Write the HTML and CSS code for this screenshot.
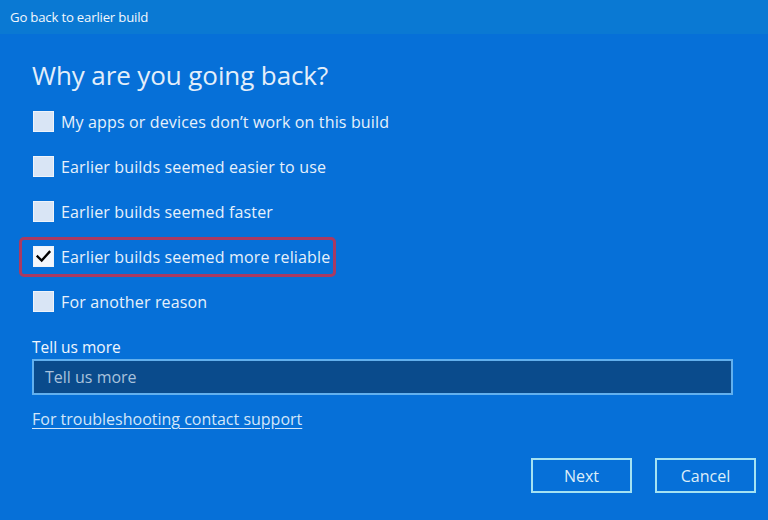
FILE: index.html
```html
<!DOCTYPE html>
<html lang="en">
<head>
<meta charset="utf-8">
<title>Go back to earlier build</title>
<link rel="stylesheet" href="styles.css">
</head>
<body>
<div class="window">
  <div class="titlebar">Go back to earlier build</div>
  <div class="content">
    <h1 class="heading">Why are you going back?</h1>
    <div class="options">
      <div class="row"><span class="opt"><span class="box"></span><span class="txt">My apps or devices don’t work on this build</span></span></div>
      <div class="row"><span class="opt"><span class="box"></span><span class="txt">Earlier builds seemed easier to use</span></span></div>
      <div class="row"><span class="opt"><span class="box"></span><span class="txt">Earlier builds seemed faster</span></span></div>
      <div class="row"><span class="opt opt-marked"><span class="box box-checked"><svg viewBox="0 0 21 21" width="21" height="21"><path d="M4 10.5 L8.5 15 L17 5.5" fill="none" stroke="#000" stroke-width="2.6" stroke-linecap="square"/></svg></span><span class="txt">Earlier builds seemed more reliable</span></span></div>
      <div class="row"><span class="opt"><span class="box"></span><span class="txt">For another reason</span></span></div>
    </div>
    <div class="field-label">Tell us more</div>
    <div class="input"><span class="placeholder">Tell us more</span></div>
    <a class="link" href="#">For troubleshooting contact support</a>
    <div class="buttons">
      <span class="btn">Next</span>
      <span class="btn">Cancel</span>
    </div>
  </div>
</div>
</body>
</html>
```
FILE: styles.css
```css
html, body {
  margin: 0;
  padding: 0;
}
body {
  width: 768px;
  height: 520px;
  overflow: hidden;
  background: #0670d8;
  font-family: "Open Sans", "Noto Sans", sans-serif;
  color: #e6f0fb;
}
.window {
  display: flex;
  flex-direction: column;
  height: 520px;
}
.titlebar {
  height: 34px;
  background: #0a79d3;
  color: #f2f7fc;
  font-size: 13.2px;
  line-height: 34px;
  padding-left: 10px;
  letter-spacing: -0.2px;
}
.content {
  display: flex;
  flex-direction: column;
  padding: 25px 12px 0 32px;
}
.heading {
  margin: 0;
  font-weight: 400;
  font-size: 26px;
  line-height: 32px;
  color: #e3eefa;
  letter-spacing: -0.1px;
}
.options {
  display: flex;
  flex-direction: column;
  margin-top: 8px;
}
.row {
  height: 45px;
  display: flex;
  align-items: center;
}
.opt {
  display: flex;
  align-items: center;
  padding-left: 1px;
}
.opt-marked {
  margin-left: -13px;
  padding: 5px 3px 5px 11px;
  border: 3px solid #a93a62;
  border-radius: 5px;
}
.box {
  width: 19px;
  height: 19px;
  background: #d9e5f5;
  border: 1px solid #eef3fa;
  display: inline-flex;
  align-items: center;
  justify-content: center;
  flex: none;
}
.box svg {
  display: block;
}
.box-checked {
  background: #f3f6fb;
}
.txt {
  margin-left: 7px;
  font-size: 16px;
  letter-spacing: 0.15px;
  line-height: 24px;
  color: #e6f0fb;
}
.field-label {
  margin-top: 12px;
  font-size: 15.5px;
  line-height: 22px;
  color: #f0f6fd;
}
.input {
  margin-top: 1px;
  height: 32px;
  border: 2px solid #62b0ee;
  background: #0a4b8c;
  display: flex;
  align-items: center;
  padding-left: 11px;
  width: 686px;
}
.placeholder {
  font-size: 16px;
  color: #a9c2dc;
}
.link {
  margin-top: 13px;
  align-self: flex-start;
  font-size: 16px;
  line-height: 22px;
  color: #d3e6f9;
  text-decoration: underline;
  text-underline-offset: 3px;
}
.buttons {
  margin-top: 28px;
  display: flex;
  justify-content: flex-end;
  gap: 23px;
}
.btn {
  width: 97px;
  height: 31px;
  border: 2px solid #a4e2f2;
  display: flex;
  align-items: center;
  justify-content: center;
  font-size: 16px;
  color: #dcedf9;
}
```
